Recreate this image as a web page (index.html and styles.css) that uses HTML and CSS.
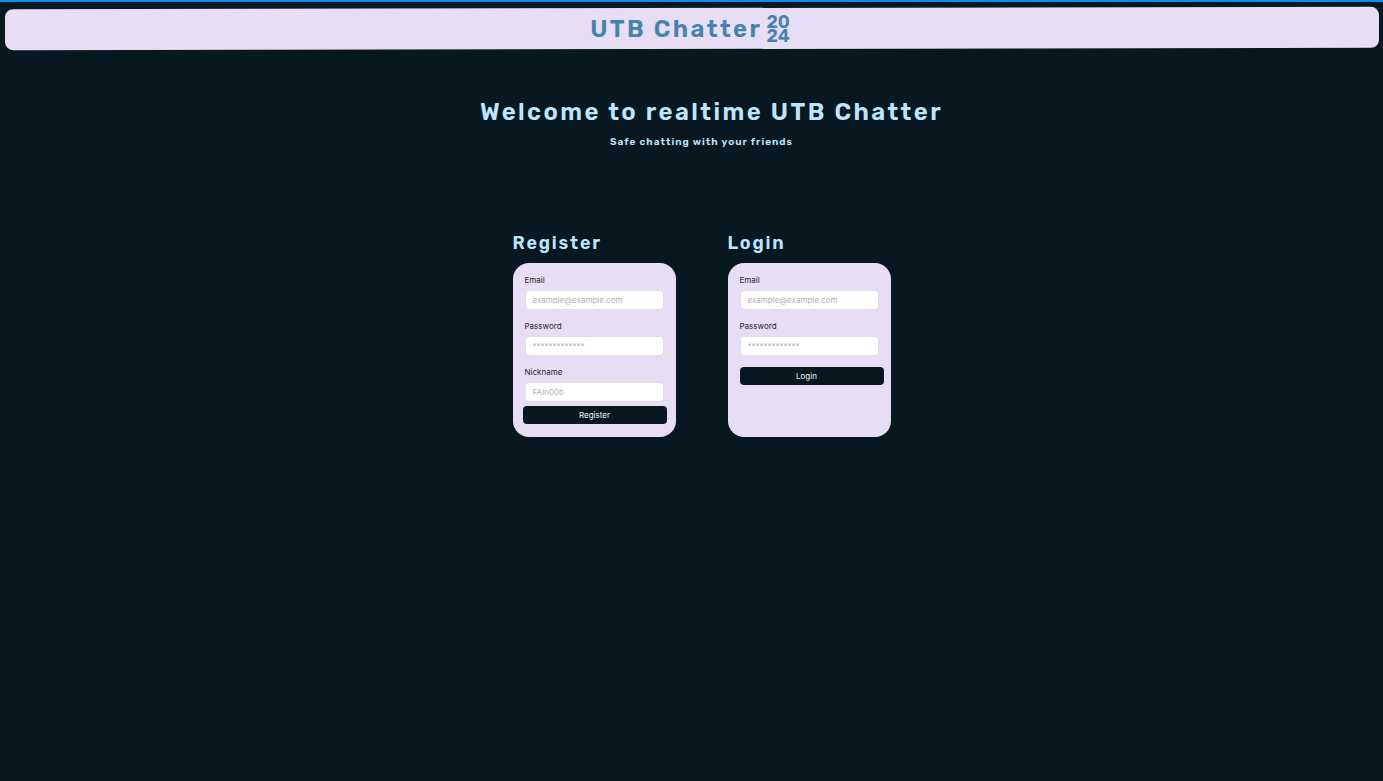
FILE: index.html
```html
<!DOCTYPE html>
<html lang="en">
<head>
<meta charset="utf-8">
<meta name="viewport" content="width=device-width, initial-scale=1">
<title>UTB Chatter</title>
<link rel="stylesheet" href="styles.css">
</head>
<body>
<header class="topbar">
  <span class="brand">UTB Chatter</span>
  <span class="year">20<br>24</span>
</header>
<main class="main">
  <h1 class="title">Welcome to realtime UTB Chatter</h1>
  <p class="subtitle">Safe chatting with your friends</p>
  <div class="forms">
    <section class="panel">
      <h2 class="heading">Register</h2>
      <form class="card">
        <div class="field">
          <label for="reg-email">Email</label>
          <input id="reg-email" type="email" placeholder="example@example.com">
        </div>
        <div class="field">
          <label for="reg-password">Password</label>
          <input id="reg-password" type="password" placeholder="*************">
        </div>
        <div class="field">
          <label for="reg-nick">Nickname</label>
          <input id="reg-nick" type="text" placeholder="FAIn00b">
        </div>
        <button class="button button-register" type="submit">Register</button>
      </form>
    </section>
    <section class="panel">
      <h2 class="heading">Login</h2>
      <form class="card">
        <div class="field">
          <label for="log-email">Email</label>
          <input id="log-email" type="email" placeholder="example@example.com">
        </div>
        <div class="field">
          <label for="log-password">Password</label>
          <input id="log-password" type="password" placeholder="*************">
        </div>
        <button class="button button-login" type="submit">Login</button>
      </form>
    </section>
  </div>
</main>
</body>
</html>
```
FILE: styles.css
```css
* {
  box-sizing: border-box;
}

body {
  margin: 0;
  min-height: 100vh;
  border-top: 2px solid #0d8ce9;
  background: #071821;
  color: #bee5ff;
  font-family: Rubik, Inter, sans-serif;
}

.topbar {
  position: relative;
  display: flex;
  align-items: center;
  justify-content: center;
  gap: 4px;
  height: 41px;
  margin: 6px 4px 0 5px;
  padding-right: 4px;
  color: #4682a9;
  font-weight: 600;
}

/* slightly tilted bar behind the logo */
.topbar::before {
  content: "";
  position: absolute;
  inset: 0;
  z-index: -1;
  border-radius: 8px;
  background: #e7def6;
  transform: rotate(-0.1deg);
}

.brand,
.title,
.subtitle,
.heading {
  font-weight: 600;
  letter-spacing: 0.1em;
}

.brand {
  font-size: 24px;
  line-height: 32px;
}

.year {
  font-size: 18px;
  line-height: 14px;
}

.main {
  display: flex;
  flex-direction: column;
  align-items: center;
  padding: 47px 0 0 20px;
}

.title {
  margin: 0;
  padding-left: 20px;
  font-size: 24px;
  line-height: 32px;
}

.subtitle {
  margin: 6px 0 0;
  font-size: 10px;
  line-height: 16px;
}

.forms {
  display: flex;
  gap: 52px;
  margin-top: 79px;
}

.panel {
  width: 163px;
}

.heading {
  margin: 0;
  font-size: 18px;
  line-height: 28px;
}

.card {
  display: flex;
  flex-direction: column;
  min-height: 174px;
  margin-top: 6px;
  padding: 11px 12px 12px;
  border-radius: 16px;
  background: #e7def6;
  font-family: Inter, sans-serif;
}

.field {
  display: flex;
  flex-direction: column;
  gap: 4px;
}

.field + .field {
  margin-top: 10px;
}

.field label {
  color: #1e1e1e;
  font-size: 8px;
  line-height: 12px;
}

.field input {
  width: 100%;
  height: 20px;
  padding: 0 7px;
  border: 1px solid #e0dcea;
  border-radius: 4px;
  background: #fff;
  color: #1e1e1e;
  font-family: inherit;
  font-size: 8px;
}

.field input::placeholder {
  color: #b3b3b3;
}

.button {
  height: 18px;
  padding: 0;
  border: 0;
  border-radius: 4px;
  background: #071821;
  color: #f5f5f5;
  font-family: inherit;
  font-size: 8px;
}

.button-register {
  margin: 4px -3px 0 -2px;
}

.button-login {
  margin: 11px -5px 0 0;
  padding-right: 10px;
}
```
